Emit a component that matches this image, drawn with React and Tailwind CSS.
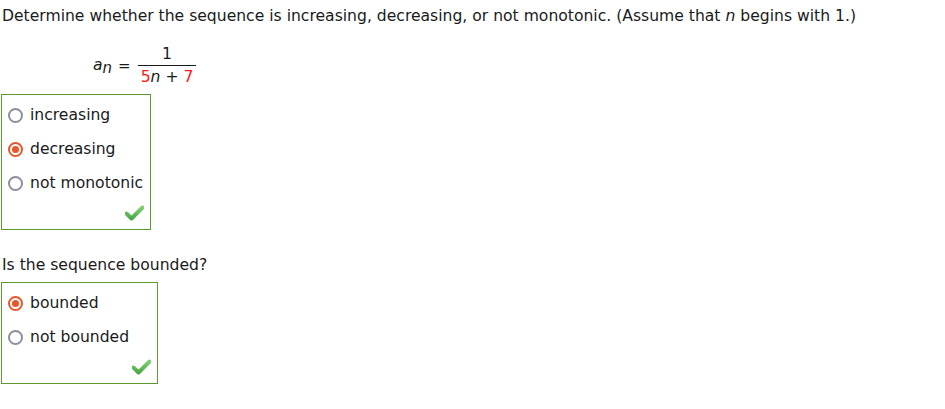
const Radio = ({ checked }) =>
  checked ? (
    <span className="flex h-[15px] w-[15px] shrink-0 items-center justify-center rounded-full border-2 border-[#e8572a]">
      <span className="h-[7px] w-[7px] rounded-full bg-[#e8572a]" />
    </span>
  ) : (
    <span className="h-[15px] w-[15px] shrink-0 rounded-full border-2 border-[#8e8e9c]" />
  );

const Check = () => (
  <svg width="19" height="16" viewBox="0 0 19 16">
    <defs>
      <linearGradient id="chk" x1="0" y1="0" x2="0" y2="1">
        <stop offset="0" stopColor="#7fcf6f" />
        <stop offset="1" stopColor="#4aa84a" />
      </linearGradient>
    </defs>
    <path
      d="M1.5 8.5 L6.5 13.5 L17.5 2.5"
      fill="none"
      stroke="url(#chk)"
      strokeWidth="4"
      strokeLinecap="round"
      strokeLinejoin="round"
    />
  </svg>
);

const ChoiceBox = ({ options, selected, width }) => (
  <div className={`ml-px flex flex-col border border-[#5d9b32] ${width}`}>
    <div className="flex flex-col gap-[15px] pt-[11px]">
      {options.map((opt) => (
        <div key={opt} className="flex h-[19px] items-center gap-[7px] pl-[6px]">
          <Radio checked={opt === selected} />
          <span>{opt}</span>
        </div>
      ))}
    </div>
    <div className="flex justify-end pr-[6px] pt-[12px] pb-[8px]">
      <Check />
    </div>
  </div>
);

export default function App() {
  return (
    <div
      className="min-h-screen bg-white text-[15.6px] leading-[19px] text-[#1a1a1a]"
      style={{ fontFamily: '"DejaVu Sans", Verdana, sans-serif' }}
    >
      <p className="pt-[7px] pl-[2px]">
        Determine whether the sequence is increasing, decreasing, or not monotonic. (Assume that{" "}
        <i>n</i> begins with 1.)
      </p>

      <div className="flex items-center pl-[93px] pt-[20px] pb-[8px]">
        <span className="relative -top-[1px] text-[15.6px]">
          <i>a</i>
          <sub className="relative top-[3px] text-[15px]">
            <i>n</i>
          </sub>
        </span>
        <span className="ml-[6px] mr-[7px] text-[15px]">=</span>
        <span className="flex flex-col items-center text-[15.6px] leading-[17px]">
          <span className="px-[6px] pb-[2px]">1</span>
          <span className="border-t border-[#1a1a1a] px-[3px] pt-[3px]">
            <span className="text-[#ff1a1a]">5</span>
            <i>n</i> + <span className="text-[#ff1a1a]">7</span>
          </span>
        </span>
      </div>

      <ChoiceBox
        options={["increasing", "decreasing", "not monotonic"]}
        selected="decreasing"
        width="w-[150px]"
      />

      <p className="pl-[2px] pt-[26px]">Is the sequence bounded?</p>

      <div className="pt-[7px]">
        <ChoiceBox options={["bounded", "not bounded"]} selected="bounded" width="w-[157px]" />
      </div>
    </div>
  );
}
